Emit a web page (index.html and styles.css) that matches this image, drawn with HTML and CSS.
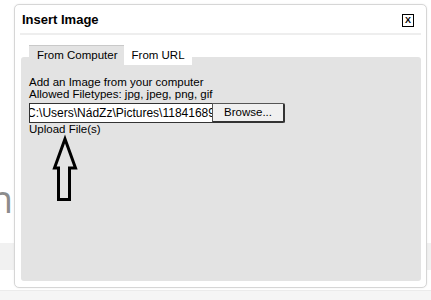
FILE: index.html
```html
<!DOCTYPE html>
<html>
<head>
    <meta charset="UTF-8">
    <title>Insert Image</title>
    <link rel="stylesheet" href="styles.css">
</head>
<body>
    <div class="page">
        <div class="hero"><span>Design</span></div>
        <div class="strip"></div>
        <div class="footer"></div>
    </div>

    <div class="dialog">
        <div class="dialog-head">
            <span class="dialog-title">Insert Image</span>
            <span class="close">X</span>
        </div>
        <div class="tabs">
            <span class="tab active">From Computer</span>
            <span class="tab">From URL</span>
        </div>
        <div class="panel">
            <div>Add an Image from your computer</div>
            <div>Allowed Filetypes: jpg, jpeg, png, gif</div>
            <div class="file">
                <div class="file-path"><span>C:\Users\NádZz\Pictures\11841689</span></div>
                <div class="file-btn">Browse...</div>
            </div>
            <div>Upload File(s)</div>
        </div>
    </div>

    <svg class="arrow" width="30" height="70" viewBox="0 0 30 70">
        <path d="M15 5 L25.5 34 L19.5 34 L19.5 65.5 L8.5 65.5 L8.5 34 L4.5 34 Z" fill="none" stroke="#000" stroke-width="3" stroke-linejoin="miter"/>
    </svg>
</body>
</html>
```

FILE: styles.css
```css
body {
    margin: 0;
    width: 431px;
    height: 300px;
    overflow: hidden;
    position: relative;
    background: #fff;
    font-family: "Liberation Sans", Arial, sans-serif;
    font-size: 11.5px;
    color: #000;
}

.page {
    display: flex;
    flex-direction: column;
}

.hero {
    margin-top: 179px;
    width: 13px;
    height: 38px;
    display: flex;
    justify-content: flex-end;
    overflow: hidden;
    font-family: "Open Sans", sans-serif;
    font-size: 38px;
    line-height: 1;
    color: #8c8c8c;
    white-space: nowrap;
}

.strip {
    margin-top: 26px;
    height: 27px;
    background-color: #f1f1f1;
}

.footer {
    margin-top: 20px;
    height: 12px;
    background-color: #f5f5f5;
    border-top: 1px solid #ebebeb;
}

.dialog {
    position: absolute;
    left: 14px;
    top: 4px;
    width: 413px;
    height: 284px;
    box-sizing: border-box;
    padding: 0 5px 6px 6px;
    background: #fff;
    border: 1px solid #d6d6d6;
    border-radius: 5px;
    box-shadow: 0 0 2px rgba(0, 0, 0, 0.08);
    display: flex;
    flex-direction: column;
}

.dialog-head {
    height: 28px;
    padding-left: 2px;
    display: flex;
    align-items: center;
    justify-content: space-between;
    border-bottom: 2px solid #eeeeee;
    margin-left: -1px;
}

.dialog-title {
    font-size: 13px;
    font-weight: bold;
}

.close {
    width: 10px;
    height: 11px;
    margin-right: 7px;
    margin-top: 3px;
    border: 1px solid #000;
    font-size: 9px;
    font-weight: bold;
    line-height: 11px;
    text-align: center;
}

.tabs {
    position: relative;
    z-index: 1;
    margin-top: 10px;
    padding-left: 8px;
    height: 20px;
    display: flex;
    align-items: flex-start;
}

.tab {
    padding: 0 7px 0 8px;
    height: 18px;
    margin-top: 2px;
    line-height: 17px;
    background: #fff;
}

.tab.active {
    margin-top: 0;
    height: 20px;
    padding: 2px 6px 0 8px;
    box-sizing: border-box;
    border-top: 1px solid #c9c9c9;
    background: #e3e3e3;
    line-height: 15px;
}

.panel {
    flex: 1;
    margin-top: -8px;
    padding: 19px 8px 0;
    background: #e3e3e3;
    border-radius: 3px;
    line-height: 12px;
}

.file {
    display: flex;
    width: 256px;
    height: 20px;
    margin-top: 3px;
    box-sizing: border-box;
}

.file-path {
    width: 183px;
    box-sizing: border-box;
    border: 1px solid #333;
    border-right: 0;
    background: #fff;
    display: flex;
    justify-content: center;
    align-items: center;
    overflow: hidden;
    white-space: nowrap;
    font-size: 12px;
}

.file-btn {
    flex: 1;
    box-sizing: border-box;
    border: 1px solid #555;
    border-right: 2px solid #333;
    border-bottom: 2px solid #333;
    border-radius: 0 2px 2px 0;
    background: #f0f0f0;
    text-align: center;
    line-height: 17px;
}

.arrow {
    position: absolute;
    left: 50px;
    top: 134px;
}
```
